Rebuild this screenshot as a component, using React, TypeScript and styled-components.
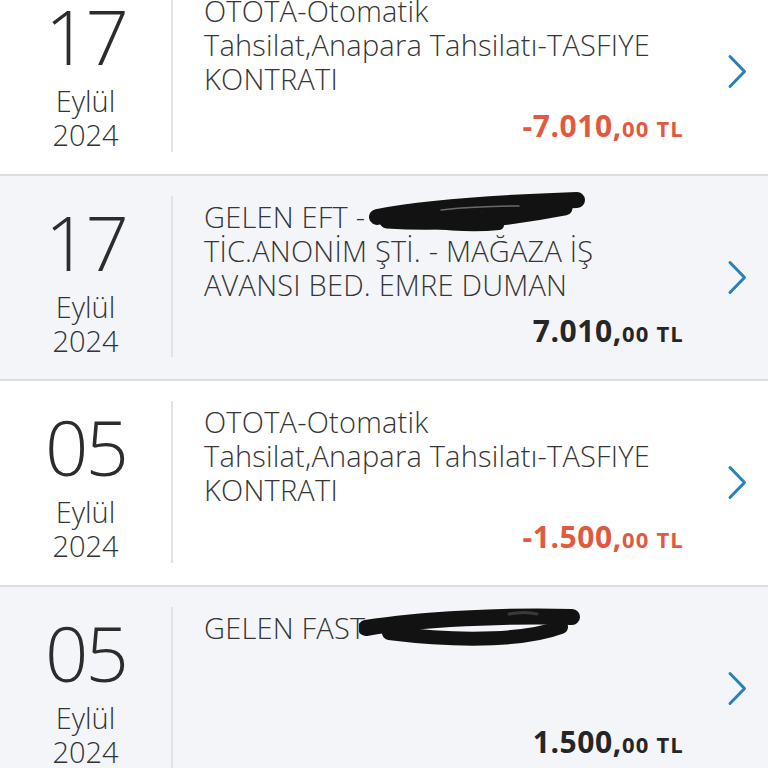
import React from "react";
import styled, { createGlobalStyle } from "styled-components";

type Scribble = "eft" | "fast";

interface ITransaction {
  day: string;
  month: string;
  year: string;
  lines: string[];
  hidden?: { text: string; scribble: Scribble };
  amount: string;
  negative: boolean;
}

const TRANSACTIONS: ITransaction[] = [
  {
    day: "17",
    month: "Eylül",
    year: "2024",
    lines: ["OTOTA-Otomatik", "Tahsilat,Anapara Tahsilatı-TASFIYE", "KONTRATI"],
    amount: "-7.010",
    negative: true,
  },
  {
    day: "17",
    month: "Eylül",
    year: "2024",
    lines: ["GELEN EFT - ", "TİC.ANONİM ŞTİ. - MAĞAZA İŞ", "AVANSI BED. EMRE DUMAN"],
    hidden: { text: "KXXXXXXXXXXI", scribble: "eft" },
    amount: "7.010",
    negative: false,
  },
  {
    day: "05",
    month: "Eylül",
    year: "2024",
    lines: ["OTOTA-Otomatik", "Tahsilat,Anapara Tahsilatı-TASFIYE", "KONTRATI"],
    amount: "-1.500",
    negative: true,
  },
  {
    day: "05",
    month: "Eylül",
    year: "2024",
    lines: ["GELEN FAST "],
    hidden: { text: "XXXXXXXXXXXX", scribble: "fast" },
    amount: "1.500",
    negative: false,
  },
];

const GlobalStyle = createGlobalStyle`
  html, body {
    margin: 0;
    padding: 0;
    background: #ffffff;
    overflow: hidden;
  }
  body {
    font-family: "Open Sans", "Noto Sans", "Liberation Sans", sans-serif;
    -webkit-font-smoothing: antialiased;
  }
`;

const ScribbleMark = ({ variant }: { variant: Scribble }) =>
  variant === "eft" ? (
    <ScribbleSvg viewBox="0 0 218 42" width={218} height={42} style={{ top: -6, left: -4 }}>
      <path d="M8 26 C 50 18, 120 12, 208 9" stroke="#121212" strokeWidth={16} fill="none" strokeLinecap="round" />
      <path d="M18 30 C 80 34, 140 28, 196 17" stroke="#121212" strokeWidth={15} fill="none" strokeLinecap="round" />
      <path d="M60 32 C 90 36, 110 36, 130 34" stroke="#121212" strokeWidth={10} fill="none" strokeLinecap="round" />
      <path d="M72 19 C 100 16, 130 15, 150 15" stroke="#6a6a6a" strokeWidth={1.5} fill="none" strokeLinecap="round" />
    </ScribbleSvg>
  ) : (
    <ScribbleSvg viewBox="0 0 222 40" width={222} height={40} style={{ top: -2, left: -14 }}>
      <path d="M7 22 C 60 13, 150 9, 213 11" stroke="#121212" strokeWidth={16} fill="none" strokeLinecap="round" />
      <path d="M30 27 C 110 37, 170 33, 202 21" stroke="#121212" strokeWidth={14} fill="none" strokeLinecap="round" />
      <path d="M150 8 C 160 6, 170 6, 178 8" stroke="#3a3a3a" strokeWidth={3} fill="none" strokeLinecap="round" />
    </ScribbleSvg>
  );

const Chevron = () => (
  <svg width="21" height="35" viewBox="0 0 21 35">
    <path d="M3 2.5 L17.5 17.5 L3 32.5" stroke="#2b80b9" strokeWidth={3} fill="none" strokeLinecap="round" strokeLinejoin="round" />
  </svg>
);

const TransactionRow = ({ tx, striped }: { tx: ITransaction; striped: boolean }) => (
  <Row striped={striped}>
    <DateCol>
      <Day>{tx.day}</Day>
      <DateLine>{tx.month}</DateLine>
      <DateLine>{tx.year}</DateLine>
    </DateCol>
    <Divider />
    <Content>
      <Description>
        {tx.lines.map((line, i) => (
          <Line key={i}>
            {line}
            {i === 0 && tx.hidden ? (
              <Redacted>
                {tx.hidden.text}
                <ScribbleMark variant={tx.hidden.scribble} />
              </Redacted>
            ) : null}
          </Line>
        ))}
      </Description>
      <Amount negative={tx.negative}>
        {tx.amount},<Cents>00 TL</Cents>
      </Amount>
    </Content>
    <ChevronCol>
      <Chevron />
    </ChevronCol>
  </Row>
);

export default function App() {
  return (
    <>
      <GlobalStyle />
      <Screen>
        <List>
          {TRANSACTIONS.map((tx, i) => (
            <TransactionRow key={i} tx={tx} striped={i % 2 === 1} />
          ))}
        </List>
      </Screen>
    </>
  );
}

const Screen = styled.div`
  width: 768px;
  height: 768px;
  overflow: hidden;
  background: #ffffff;
`;

// list is scrolled, first row is partly above the top edge
const List = styled.div`
  margin-top: -30px;
  display: flex;
  flex-direction: column;
`;

interface IRow {
  striped: boolean;
}
const Row = styled.div<IRow>`
  height: 203.5px;
  display: flex;
  background: ${props => (props.striped ? "#f4f5f9" : "#ffffff")};
  border-bottom: 2px solid #dcdde2;
  flex-shrink: 0;
`;

const DateCol = styled.div`
  width: 171px;
  padding-top: 31px;
  display: flex;
  flex-direction: column;
  align-items: center;
  color: #2c2c2c;
  font-weight: 300;
`;

const Day = styled.div`
  font-size: 76px;
  line-height: 70px;
  letter-spacing: -3px;
  margin-bottom: 13px;
`;

const DateLine = styled.div`
  font-size: 29px;
  line-height: 34px;
  color: #333333;
`;

const Divider = styled.div`
  width: 2px;
  margin: 20px 0 22px;
  background: #e1e2e5;
`;

const Content = styled.div`
  flex: 1;
  display: flex;
  flex-direction: column;
  padding: 24px 0 29px 31px;
  min-width: 0;
`;

const Description = styled.div`
  color: #363636;
  font-size: 29px;
  line-height: 34px;
  font-weight: 300;
  letter-spacing: 0.2px;
`;

const Line = styled.div`
  white-space: nowrap;
`;

const Redacted = styled.span`
  position: relative;
  color: transparent;
`;

const ScribbleSvg = styled.svg`
  position: absolute;
`;

interface IAmount {
  negative: boolean;
}
const Amount = styled.div<IAmount>`
  margin-top: auto;
  align-self: flex-end;
  font-size: 30px;
  line-height: 34px;
  font-weight: 700;
  letter-spacing: 0.6px;
  color: ${props => (props.negative ? "#e15a3f" : "#262626")};
`;

const Cents = styled.span`
  font-size: 22px;
  letter-spacing: 1.2px;
`;

const ChevronCol = styled.div`
  width: 84px;
  display: flex;
  align-items: center;
  justify-content: flex-end;
  padding-right: 20px;
  box-sizing: border-box;
`;
